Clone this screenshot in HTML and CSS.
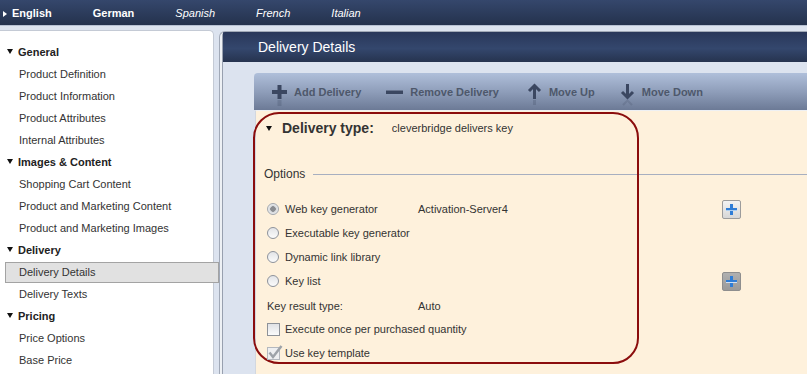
FILE: index.html
```html
<!DOCTYPE html>
<html lang="en">
<head>
  <meta charset="UTF-8" />
  <title>Delivery Details</title>
  <link rel="stylesheet" href="styles.css">
</head>
<body>

  <div class="topbar">
    <span class="lang lang-main"><span class="lang-arrow"></span>English</span>
    <span class="lang lang-main">German</span>
    <span class="lang">Spanish</span>
    <span class="lang">French</span>
    <span class="lang">Italian</span>
  </div>

  <div class="main">
    <div class="sidebar">
      <div class="nav-group">General</div>
      <div class="nav-item">Product Definition</div>
      <div class="nav-item">Product Information</div>
      <div class="nav-item">Product Attributes</div>
      <div class="nav-item">Internal Attributes</div>
      <div class="nav-group">Images &amp; Content</div>
      <div class="nav-item">Shopping Cart Content</div>
      <div class="nav-item">Product and Marketing Content</div>
      <div class="nav-item">Product and Marketing Images</div>
      <div class="nav-group">Delivery</div>
      <div class="nav-item active">Delivery Details</div>
      <div class="nav-item">Delivery Texts</div>
      <div class="nav-group">Pricing</div>
      <div class="nav-item">Price Options</div>
      <div class="nav-item">Base Price</div>
    </div>

    <div class="panel">
      <div class="panel-inner">
        <div class="panel-header">Delivery Details</div>
        <div class="panel-body">

          <div class="toolbar">
            <span class="tb-btn">
              <svg class="tb-icon" width="15" height="14" viewBox="0 0 15 14">
                <rect x="5.5" y="0" width="4" height="14" fill="#3b4761"/>
                <rect x="0" y="5" width="15" height="4" fill="#3b4761"/>
                <rect x="5.5" y="15" width="4" height="6" fill="#3b4761" opacity="0.25"/>
              </svg>
              Add Delivery
            </span>
            <span class="tb-btn tb-remove">
              <svg class="tb-icon" width="17" height="14" viewBox="0 0 17 14">
                <rect x="0" y="5" width="17" height="4" fill="#3b4761"/>
                <rect x="0" y="5" width="17" height="1" fill="#6a7690"/>
              </svg>
              Remove Delivery
            </span>
            <span class="tb-btn">
              <svg class="tb-icon tb-arrow" width="13" height="15" viewBox="0 0 13 15">
                <path d="M6.5 1.5 V15 M1 7 L6.5 1.5 L12 7" fill="none" stroke="#3b4761" stroke-width="3"/>
                <rect x="5" y="16" width="3" height="5" fill="#3b4761" opacity="0.25"/>
              </svg>
              Move Up
            </span>
            <span class="tb-btn">
              <svg class="tb-icon tb-arrow" width="13" height="15" viewBox="0 0 13 15">
                <path d="M6.5 0 V13.5 M1 8 L6.5 13.5 L12 8" fill="none" stroke="#3b4761" stroke-width="3"/>
                <path d="M2 21 L6.5 16.5 L11 21" fill="none" stroke="#3b4761" stroke-width="2" opacity="0.2"/>
              </svg>
              Move Down
            </span>
          </div>

          <div class="cream">
            <div class="highlight-ring"></div>

            <div class="dtype">
              <span class="dtype-arrow"></span>
              <span class="dtype-label">Delivery type:</span>
              <span class="dtype-value">cleverbridge delivers key</span>
            </div>

            <div class="legend">Options</div>

            <div class="options">
              <div class="opt"><span class="radio checked"></span>Web key generator</div>
              <div>Activation-Server4</div>
              <div class="plus-btn"><svg width="17" height="17" viewBox="0 0 17 17"><rect x="7" y="3" width="3" height="11" fill="#2f7dd6"/><rect x="3" y="7" width="11" height="3" fill="#2f7dd6"/><rect x="3" y="9" width="11" height="1" fill="#a9cdf2"/></svg></div>

              <div class="opt"><span class="radio"></span>Executable key generator</div>
              <div></div>
              <div></div>

              <div class="opt"><span class="radio"></span>Dynamic link library</div>
              <div></div>
              <div></div>

              <div class="opt"><span class="radio"></span>Key list</div>
              <div></div>
              <div class="plus-btn dark"><svg width="17" height="17" viewBox="0 0 17 17"><rect x="7" y="3" width="3" height="11" fill="#2f7dd6"/><rect x="3" y="7" width="11" height="3" fill="#2f7dd6"/><rect x="3" y="9" width="11" height="1" fill="#cfe0f4"/></svg></div>

              <div class="opt-gap">Key result type:</div>
              <div class="opt-gap">Auto</div>
              <div></div>

              <div class="opt wide"><span class="check"></span>Execute once per purchased quantity</div>

              <div class="opt wide">
                <span class="check checked"><svg width="16" height="15" viewBox="0 0 16 15"><path d="M2.5 7.5 L6 12 L14.5 1" fill="none" stroke="#9ea3a9" stroke-width="2.5"/></svg></span>Use key template
              </div>
            </div>
          </div>

        </div>
      </div>
    </div>
  </div>

</body>
</html>
```

FILE: styles.css
```css
html, body {
  margin: 0;
  padding: 0;
  height: 374px;
  overflow: hidden;
}
body {
  font-family: "Liberation Sans", Arial, sans-serif;
  font-size: 11px;
  color: #333;
  background: #dce3ef;
}

/* language bar */
.topbar {
  height: 25px;
  display: flex;
  align-items: center;
  gap: 41px;
  padding-left: 3px;
  background: linear-gradient(#35476c, #24324d);
  border-bottom: 1px solid #b7c1d3;
  color: #fff;
}
.lang {
  font-style: italic;
}
.lang-main {
  font-style: normal;
  font-weight: bold;
}
.lang-arrow {
  display: inline-block;
  width: 0;
  height: 0;
  border-top: 3.5px solid transparent;
  border-bottom: 3.5px solid transparent;
  border-left: 4px solid #fff;
  margin-right: 5px;
  vertical-align: 0;
}

.main {
  display: flex;
  height: 348px;
  padding-top: 4px;
  box-sizing: border-box;
}

/* left navigation */
.sidebar {
  width: 213px;
  flex-shrink: 0;
  background: #fff;
  border-top: 1px solid #c4cad5;
  border-right: 1px solid #c4cad5;
  border-top-right-radius: 5px;
  margin-right: 5px;
  padding-top: 10px;
  box-sizing: content-box;
  position: relative;
  z-index: 1;
}
.nav-group {
  height: 22px;
  line-height: 22px;
  padding-left: 7px;
  font-weight: bold;
  color: #222;
}
.nav-group::before {
  content: "";
  display: inline-block;
  width: 0;
  height: 0;
  border-left: 3.5px solid transparent;
  border-right: 3.5px solid transparent;
  border-top: 5px solid #111;
  margin-right: 5px;
  vertical-align: 2px;
}
.nav-item {
  height: 22px;
  line-height: 22px;
  padding-left: 19px;
  color: #333;
}
.nav-item.active {
  height: 19px;
  line-height: 19px;
  margin: 1px -6px 0 5px;
  padding-left: 13px;
  background: #e1e1e1;
  border: 1px solid #a3a3a3;
}

/* main panel */
.panel {
  flex: 1;
  margin-top: 1px;
  padding-left: 2px;
  background: #eef1f5;
  border-top: 1px solid #a1a9b7;
  border-left: 1px solid #a1a9b7;
  border-top-left-radius: 6px;
  overflow: hidden;
}
.panel-inner {
  height: 100%;
  display: flex;
  flex-direction: column;
  border-left: 1px solid #98a0af;
  border-top-left-radius: 4px;
  background: #dce3ef;
}
.panel-header {
  height: 30px;
  line-height: 30px;
  padding-left: 35px;
  font-size: 14px;
  color: #fff;
  background: linear-gradient(#29375a, #34476d 55%, #26334f);
}
.panel-body {
  flex: 1;
  display: flex;
  flex-direction: column;
  padding: 11px 0 0 31px;
}

.toolbar {
  height: 37px;
  display: flex;
  align-items: center;
  padding-left: 18px;
  border-top-left-radius: 4px;
  background: linear-gradient(#afbfda, #8f9eba 50%, #6c7a96);
  font-weight: bold;
  color: #4e586b;
}
.tb-btn {
  display: flex;
  align-items: center;
  margin-right: 25px;
}
.tb-remove {
  margin-right: 28px;
}
.tb-icon {
  overflow: visible;
  margin-right: 7px;
}
.tb-arrow {
  margin-left: 1px;
  margin-right: 8px;
}

/* cream settings area */
.cream {
  flex: 1;
  position: relative;
  margin-left: 1px;
  background: #fef1dc;
  border-left: 1px solid #d2d7df;
  border-top: 1px solid #eef0f3;
}
.highlight-ring {
  position: absolute;
  left: -3px;
  top: 1px;
  width: 386px;
  height: 252px;
  box-sizing: border-box;
  border: 2px solid #8b0d0d;
  border-radius: 26px;
}

.dtype {
  display: flex;
  align-items: center;
  height: 18px;
  margin-top: 8px;
  padding-left: 10px;
}
.dtype-arrow {
  width: 0;
  height: 0;
  border-left: 3.5px solid transparent;
  border-right: 3.5px solid transparent;
  border-top: 5px solid #111;
  margin-right: 10px;
}
.dtype-label {
  font-size: 14px;
  font-weight: bold;
  color: #333;
  margin-right: 18px;
}

.legend {
  display: flex;
  align-items: center;
  height: 16px;
  margin-top: 29px;
  padding-left: 8px;
  font-size: 12px;
}
.legend::after {
  content: "";
  flex: 1;
  border-top: 1px solid #a7afc0;
  margin-left: 8px;
}

.options {
  display: grid;
  grid-template-columns: 151px 304px 19px;
  grid-auto-rows: 24px;
  align-items: center;
  margin-top: 15px;
  padding-left: 11px;
}
.opt {
  display: flex;
  align-items: center;
}
.opt-gap {
  padding-top: 2px;
}
.opt.wide {
  grid-column: 1 / 4;
}
.radio {
  width: 10px;
  height: 10px;
  border: 1px solid #8d929b;
  border-radius: 50%;
  background: linear-gradient(#e2e4e7, #fbfbfb);
  margin-right: 6px;
}
.radio.checked {
  background: radial-gradient(circle, #8a8c90 0 2.5px, #d4d6d9 3px, #eceef0 5px);
  border-color: #a3a7ad;
}
.check {
  width: 11px;
  height: 11px;
  border: 1px solid #8e9298;
  background: linear-gradient(#e0e2e5, #fbfbfb);
  margin-right: 5px;
  position: relative;
}
.check.checked {
  background: #eeeff1;
  border-color: #b4b8be;
}
.check svg {
  position: absolute;
  left: -1px;
  top: -3px;
}
.plus-btn {
  width: 17px;
  height: 17px;
  border: 1px solid #9c9c9c;
  border-radius: 2px;
  background: linear-gradient(#f3f3f3, #d7d7d7);
}
.plus-btn.dark {
  border-color: #8e8e8e;
  background: linear-gradient(#b0b0b0, #9a9a9a);
}
.plus-btn svg {
  display: block;
}
```
